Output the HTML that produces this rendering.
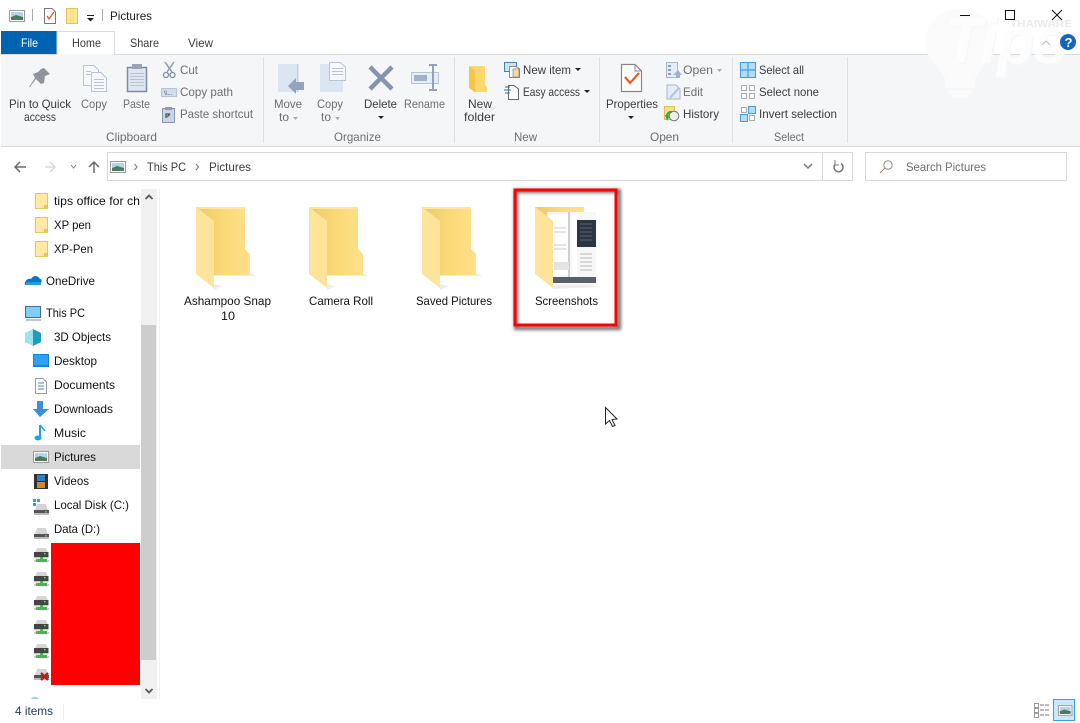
<!DOCTYPE html>
<html><head><meta charset="utf-8"><title>Pictures</title>
<style>
html,body{margin:0;padding:0;background:#fff;width:1080px;height:723px;overflow:hidden}
svg{display:block;position:absolute;left:0;top:0}
text{font-family:"Liberation Sans",sans-serif;font-size:12px;fill:#1e1e1e}
.g{fill:#6d6d6d}.r{fill:#3b3b3b}.n{fill:#111}
</style></head><body>
<svg width="1080" height="723" viewBox="0 0 1080 723" xmlns="http://www.w3.org/2000/svg">
<defs>
<linearGradient id="fb" x1="0" x2="1" y1="0" y2="0"><stop offset="0" stop-color="#eec868"/><stop offset=".5" stop-color="#fad976"/><stop offset="1" stop-color="#ffe08c"/></linearGradient>
<filter id="bs" x="-20%" y="-20%" width="140%" height="140%"><feGaussianBlur stdDeviation="1.500"/></filter>
<g id="folder">
<path d="M214 276L256 276L248 272L214 272Z M214 290L222 286L214 284Z" fill="#ececec"/>
<path d="M196 207H245V249L250 254V275H214V223Z" fill="url(#fb)"/>
<path d="M196 207H245V209H199Z" fill="#fbe6a6"/>
<path d="M196 207L214 221V288L196 274Z" fill="#fde49a"/>
</g>
<g id="sf"><rect x=".5" y=".5" width="12" height="15" fill="#ffe9a5" stroke="#e8c55c"/><rect x="9" y="12" width="4" height="4" fill="#e8c55c"/></g>
<g id="pic"><rect x=".5" y=".5" width="15" height="11" fill="#fff" stroke="#9a9a9a"/><rect x="2" y="2" width="12" height="8" fill="#b7d4e6"/><path d="M2 7L7 5L14 7V10H2Z" fill="#4f7a62"/></g>
<g id="drv"><path d="M1 7L3 1H12L14 7Z" fill="#d5d5d5"/><rect x="0" y="7" width="15" height="5" fill="#555"/><rect x="0" y="10" width="15" height="2" fill="#bbb"/><rect x="11" y="8" width="1.500" height="1.500" fill="#4fe04f"/></g>
<g id="net"><path d="M1 5L3 0H12L14 5Z" fill="#d5d5d5"/><rect x="0" y="4" width="14.500" height="5" fill="#444"/><rect x="10" y="5" width="1.500" height="1.500" fill="#5fe05f"/><rect x="0" y="9" width="14.500" height="1.500" fill="#c8c8c8"/><rect x="6" y="9" width="3" height="3" fill="#48b455"/><rect x="2" y="11" width="11" height="3" fill="#48b455"/><rect x="0" y="12" width="2" height="2" fill="#ccc"/><rect x="13" y="12" width="2" height="2" fill="#ccc"/></g>
</defs>

<!-- title bar -->
<use href="#pic" x="9" y="10"/>
<rect x="32" y="9" width="1" height="12" fill="#aaa"/>
<path d="M44.500 8.500H52L55.500 12V23.500H44.500Z" fill="#fff" stroke="#777"/>
<path d="M47 16L49 19L54 12" fill="none" stroke="#e8522a" stroke-width="1.300"/>
<rect x="66.500" y="8.500" width="11" height="15" fill="#ffe38f" stroke="#e6c45c"/>
<rect x="87" y="15" width="7" height="1" fill="#222"/><path d="M87 18H94L90.500 21.500Z" fill="#222"/>
<rect x="102" y="9" width="1" height="12" fill="#aaa"/>
<text x="110" y="20" textLength="42" lengthAdjust="spacingAndGlyphs">Pictures</text>

<!-- tabs -->
<rect x="1" y="31" width="56" height="23" fill="#0063b1"/>
<text x="21" y="47" textLength="17" lengthAdjust="spacingAndGlyphs" style="fill:#fff">File</text>
<rect x="1" y="54" width="1079" height="1" fill="#dadbdc"/>
<path d="M57 54.500V31.500H114.500V54.500" fill="#f5f6f7" stroke="#dadbdc"/>
<rect x="58" y="32" width="56" height="23" fill="#fff"/>
<text x="72" y="47" textLength="29" lengthAdjust="spacingAndGlyphs" class="r">Home</text>
<text x="130" y="47" textLength="29" lengthAdjust="spacingAndGlyphs" class="r">Share</text>
<text x="188" y="47" textLength="25" lengthAdjust="spacingAndGlyphs" class="r">View</text>

<!-- ribbon -->
<rect x="1" y="55" width="1079" height="91" fill="#f5f6f7"/>
<rect x="58" y="54" width="56" height="2" fill="#f5f6f7"/>
<rect x="1" y="146" width="1079" height="1" fill="#dadbdc"/>
<g fill="#dfe0e1"><rect x="263" y="57" width="1" height="86"/><rect x="454" y="57" width="1" height="86"/><rect x="599" y="57" width="1" height="86"/><rect x="732" y="57" width="1" height="86"/><rect x="847" y="57" width="1" height="86"/></g>

<!-- pin -->
<path d="M44 68L50 74L45 76L44 83L41 84L36 79L30 87L29 87L35 78L33 74L38 72L41 69Z" fill="#8f959a"/>
<!-- copy -->
<g fill="#f6f8fb" stroke="#b8c4d6"><path d="M83.500 65.500H94L98.500 70V85.500H83.500Z"/><path d="M91.500 72.500H101L106.500 78V91.500H91.500Z"/></g>
<g fill="#b8c4d6"><rect x="94" y="79" width="10" height="1"/><rect x="94" y="82" width="10" height="1"/><rect x="94" y="85" width="10" height="1"/><rect x="94" y="88" width="10" height="1"/><rect x="86" y="71" width="5" height="1"/><rect x="86" y="74" width="5" height="1"/></g>
<!-- paste -->
<rect x="127.500" y="67.500" width="19" height="24" fill="#dfe6f1" stroke="#7f8ba0" stroke-width="1.500"/>
<rect x="132" y="64" width="10" height="5" fill="#9aa3b2"/>
<g fill="#b8c4d6"><rect x="130" y="73" width="14" height="1"/><rect x="130" y="76" width="14" height="1"/><rect x="130" y="79" width="14" height="1"/><rect x="130" y="82" width="14" height="1"/><rect x="130" y="85" width="14" height="1"/></g>
<!-- small clip icons -->
<path d="M165 62L172 72M174 62L167 72" stroke="#8d99ae" stroke-width="1.500" fill="none"/><circle cx="166" cy="75" r="2.500" fill="none" stroke="#7e8da6" stroke-width="1.300"/><circle cx="172.500" cy="75" r="2.500" fill="none" stroke="#7e8da6" stroke-width="1.300"/>
<rect x="161.500" y="88.500" width="15" height="8" fill="#d3dcec" stroke="#b6c2d6"/><text x="164" y="95" style="font-size:6px;fill:#555">\\...</text>
<rect x="162.500" y="108.500" width="12" height="14" fill="#c9d4e6" stroke="#8595ad"/><rect x="165" y="107" width="7" height="3" fill="#8f9aac"/><path d="M166 118V114H170M170 114L167 117" stroke="#555" fill="none" stroke-width="1.300"/>
<text x="180" y="74" textLength="18" lengthAdjust="spacingAndGlyphs" class="g">Cut</text>
<text x="180" y="96" textLength="53" lengthAdjust="spacingAndGlyphs" class="g">Copy path</text>
<text x="180" y="118" textLength="73" lengthAdjust="spacingAndGlyphs" class="g">Paste shortcut</text>
<text x="9" y="108" textLength="62" lengthAdjust="spacingAndGlyphs" class="r">Pin to Quick</text>
<text x="24" y="121" textLength="32" lengthAdjust="spacingAndGlyphs" class="r">access</text>
<text x="81" y="108" textLength="26" lengthAdjust="spacingAndGlyphs" class="g">Copy</text>
<text x="123" y="108" textLength="27" lengthAdjust="spacingAndGlyphs" class="g">Paste</text>
<text x="106" y="141" textLength="51" lengthAdjust="spacingAndGlyphs" class="g">Clipboard</text>

<!-- organize -->
<rect x="278" y="64" width="21" height="28" fill="#dce5f2"/><rect x="297" y="64" width="1" height="28" fill="#c0cde0"/>
<path d="M288 86L296 78V82H304V90H296V94Z" fill="#92a4bd"/>
<text x="274" y="108" textLength="28" lengthAdjust="spacingAndGlyphs" class="g">Move</text>
<text x="279" y="121" textLength="10" lengthAdjust="spacingAndGlyphs" class="g">to</text><path d="M293 117H298L295.500 120Z" fill="#aaa"/>
<rect x="320" y="64" width="23" height="28" fill="#dce5f2"/>
<path d="M329.500 62.500H340L345.500 67V80.500H329.500Z" fill="#f6f8fb" stroke="#b8c4d6"/><g fill="#b8c4d6"><rect x="332" y="68" width="11" height="1"/><rect x="332" y="71" width="11" height="1"/><rect x="332" y="74" width="11" height="1"/></g>
<text x="317" y="108" textLength="26" lengthAdjust="spacingAndGlyphs" class="g">Copy</text>
<text x="321" y="121" textLength="10" lengthAdjust="spacingAndGlyphs" class="g">to</text><path d="M335 117H340L337.500 120Z" fill="#aaa"/>
<path d="M370 67L392 89M392 67L370 89" stroke="#8493ae" stroke-width="4.500" fill="none"/>
<text x="364" y="108" textLength="33" lengthAdjust="spacingAndGlyphs" class="r">Delete</text><path d="M378 116H384L381 119Z" fill="#222"/>
<rect x="411.500" y="72.500" width="27" height="11" fill="#e7edf6" stroke="#b5c3d9"/><rect x="414" y="75" width="13" height="6" fill="#a4b0c4"/>
<path d="M429 65H437M433 65V90M429 90H437" stroke="#93a1b8" stroke-width="2" fill="none"/>
<text x="404" y="108" textLength="41" lengthAdjust="spacingAndGlyphs" class="g">Rename</text>
<text x="334" y="141" textLength="47" lengthAdjust="spacingAndGlyphs" class="g">Organize</text>

<!-- new -->
<path d="M470 66H485V85L487 88V92H474L470 88Z" fill="#fbd86f"/><path d="M469 66L475 70V92L469 88Z" fill="#f6c644"/>
<text x="468" y="108" textLength="24" lengthAdjust="spacingAndGlyphs" class="r">New</text>
<text x="464" y="121" textLength="31" lengthAdjust="spacingAndGlyphs" class="r">folder</text>
<rect x="504.500" y="62.500" width="12" height="9" fill="#cfe2ef" stroke="#3d85b3"/>
<path d="M509.500 66.500H516L519.500 69V77.500H509.500Z" fill="#fff" stroke="#888"/>
<rect x="513" y="69" width="6" height="8" fill="#f4d9a0" stroke="#777" stroke-width=".6"/>
<text x="523" y="74" textLength="48" lengthAdjust="spacingAndGlyphs" class="r">New item</text><path d="M575 68H581L578 71Z" fill="#222"/>
<path d="M508.500 85.500H514L518.500 89V99.500H508.500Z" fill="#fff" stroke="#666"/>
<path d="M505 87H510M504 90H511M505 93H510" stroke="#2c6fa5" fill="none"/>
<text x="523" y="96" textLength="57" lengthAdjust="spacingAndGlyphs" class="r">Easy access</text><path d="M584 90H590L587 93Z" fill="#222"/>
<text x="514" y="141" textLength="23" lengthAdjust="spacingAndGlyphs" class="g">New</text>

<!-- open -->
<path d="M621.500 64.500H635L641.500 71V91.500H621.500Z" fill="#fff" stroke="#888" stroke-width="1.200"/>
<path d="M635 64.500V71H641.500" fill="none" stroke="#888"/>
<path d="M625 77L630 83L639 73" fill="none" stroke="#ee5a24" stroke-width="2.200"/>
<text x="606" y="108" textLength="52" lengthAdjust="spacingAndGlyphs" class="r">Properties</text><path d="M628 116H634L631 119Z" fill="#222"/>
<rect x="666.500" y="62.500" width="11" height="15" fill="#e6ecf5" stroke="#a9b6c9"/><rect x="668" y="65" width="3" height="2" fill="#8ea0b8"/><rect x="668" y="69" width="3" height="2" fill="#8ea0b8"/><rect x="668" y="73" width="3" height="2" fill="#8ea0b8"/><path d="M676 78V75H673L678 70L682 75H680V78Z" fill="#9fb0c8"/>
<text x="683" y="74" textLength="30" lengthAdjust="spacingAndGlyphs" class="g">Open</text><path d="M717 69H722L719.500 72Z" fill="#aaa"/>
<path d="M667 85H676L680 89V99H667Z" fill="#e6ecf5" stroke="#a9b6c9"/><path d="M670 98L679 88" stroke="#b3c2d8" stroke-width="2"/>
<text x="683" y="96" textLength="20" lengthAdjust="spacingAndGlyphs" class="g">Edit</text>
<rect x="664.500" y="106.500" width="10" height="13" fill="#ffdf80" stroke="#e2bf50"/><circle cx="674" cy="116" r="4.800" fill="#eee" stroke="#777"/><path d="M667 116A4 4 0 0 1 672 112" stroke="#39a845" stroke-width="2" fill="none"/><path d="M667 121L665 115H670Z" fill="#39a845"/>
<text x="683" y="118" textLength="36" lengthAdjust="spacingAndGlyphs" class="r">History</text>
<text x="650" y="141" textLength="29" lengthAdjust="spacingAndGlyphs" class="g">Open</text>

<!-- select -->
<rect x="740.500" y="62.500" width="15" height="15" fill="#b6dcf7" stroke="#3f9ce0"/><path d="M748 62V78M740 70H756" stroke="#3f9ce0" stroke-width="1.200"/>
<text x="759" y="74" textLength="45" lengthAdjust="spacingAndGlyphs" class="r">Select all</text>
<g fill="#fff" stroke="#a8a8a8"><rect x="741.500" y="85.500" width="5" height="5"/><rect x="749.500" y="85.500" width="5" height="5"/><rect x="741.500" y="93.500" width="5" height="5"/><rect x="749.500" y="93.500" width="5" height="5"/><rect x="741.500" y="107.500" width="5" height="5"/><rect x="749.500" y="115.500" width="5" height="5"/></g>
<g fill="#b6dcf7" stroke="#3f9ce0"><rect x="748.500" y="106.500" width="7" height="7"/><rect x="740.500" y="114.500" width="7" height="7"/></g>
<text x="759" y="96" textLength="60" lengthAdjust="spacingAndGlyphs" class="r">Select none</text>
<text x="759" y="118" textLength="78" lengthAdjust="spacingAndGlyphs" class="r">Invert selection</text>
<text x="774" y="141" textLength="30" lengthAdjust="spacingAndGlyphs" class="g">Select</text>

<!-- watermark -->
<g>
<path d="M960 9C939 9 925 24 925 42C925 56 937 66 945 78V88H975V78C984 66 995 56 995 42C995 24 981 9 960 9Z" fill="#fbfbfb"/>
<path d="M948 92H972M951 96H969" stroke="#fbfbfb" stroke-width="3"/>
<text x="946.500" y="64.500" textLength="122" lengthAdjust="spacingAndGlyphs" style="font-size:64px;font-weight:bold;font-style:italic;fill:#f8f8f8">Tips</text>
<text x="945" y="63" textLength="122" lengthAdjust="spacingAndGlyphs" style="font-size:64px;font-weight:bold;font-style:italic;fill:#fff;opacity:.85">Tips</text>
<text x="1010" y="27" textLength="62" lengthAdjust="spacingAndGlyphs" style="font-size:10px;font-weight:bold;fill:#ececec">THAIWARE</text>
</g>

<!-- window buttons -->
<rect x="960" y="15" width="10" height="1" fill="#111"/>
<rect x="1005.500" y="10.500" width="9" height="9" fill="none" stroke="#111"/>
<path d="M1052 10L1062 20M1062 10L1052 20" stroke="#111" fill="none"/>
<path d="M1042 45L1046 41L1050 45" stroke="#bbb" fill="none"/>
<circle cx="1068" cy="42" r="8" fill="#1565c0"/>
<text x="1064.500" y="47" style="font-size:13px;font-weight:bold;fill:#fff">?</text>

<!-- nav buttons -->
<path d="M26 167H15M20 162L15 167L20 172" stroke="#6b6b6b" stroke-width="1.500" fill="none"/>
<path d="M45 167H55M50 162L55 167L50 172" stroke="#dadada" stroke-width="1.500" fill="none"/>
<path d="M71 165L73.500 168L76 165" stroke="#8a8a8a" fill="none"/>
<path d="M94 173V162M89 167L94 162L99 167" stroke="#6b6b6b" stroke-width="1.500" fill="none"/>

<!-- address -->
<rect x="107.500" y="152.500" width="745" height="28" fill="#fff" stroke="#d9d9d9"/>
<rect x="822" y="153" width="1" height="28" fill="#d9d9d9"/>
<use href="#pic" x="110" y="161"/>
<path d="M134.500 164L137 167L134.500 170" stroke="#777" fill="none"/>
<text x="147" y="171" textLength="39" lengthAdjust="spacingAndGlyphs" class="r">This PC</text>
<path d="M196 164L198.500 167L196 170" stroke="#777" fill="none"/>
<text x="209" y="171" textLength="42" lengthAdjust="spacingAndGlyphs" class="r">Pictures</text>
<path d="M804 164L808 168L812 164" stroke="#777" stroke-width="1.500" fill="none"/>
<path d="M841 163.500A4.500 4.500 0 1 1 835 164.500" stroke="#777" stroke-width="1.500" fill="none"/><path d="M835 160V165H839" stroke="#777" fill="none"/>
<rect x="865.500" y="152.500" width="201" height="28" fill="#fff" stroke="#d9d9d9"/>
<circle cx="888" cy="165" r="4.200" fill="none" stroke="#8a8a8a"/><path d="M885 168L880 173" stroke="#b47a6a"/>
<text x="906" y="171" textLength="80" lengthAdjust="spacingAndGlyphs" class="g">Search Pictures</text>

<!-- nav pane -->
<rect x="1" y="445" width="139" height="24" fill="#d9d9d9"/>
<use href="#sf" x="35" y="193"/><use href="#sf" x="35" y="217"/><use href="#sf" x="35" y="241"/>
<path d="M25 285C24 281 28 278 31 279C33 275 38 275 40 279C43 279 41 281 41 285Z" fill="#0a74c9"/><path d="M26 282H41V285H26Z" fill="#2d97e3"/>
<rect x="25.500" y="306.500" width="15" height="11" fill="#7fd0f5" stroke="#4a6b8c"/><rect x="26" y="319" width="15" height="2" fill="#bac6d2"/>
<path d="M33 329L41 333V342L33 346Z" fill="#1f9cba"/><path d="M33 329L25 333V342L33 346Z" fill="#9be4ee"/>
<rect x="33" y="354" width="16" height="13" fill="#1482d6"/><rect x="34" y="355" width="14" height="10" fill="#2ea1f2"/>
<path d="M35.500 378.500H43L46.500 382V393.500H35.500Z" fill="#fff" stroke="#999"/><path d="M38 383H44M38 386H44M38 389H44" stroke="#3e8dd0"/>
<path d="M37 401H43V409H49L40 417L33 409H37Z" fill="#3d8edb"/>
<path d="M40 425V438" stroke="#20a0ea" stroke-width="2"/><ellipse cx="38" cy="438" rx="3.500" ry="2.500" fill="#20a0ea"/><path d="M40 425L45 431" stroke="#20a0ea" stroke-width="1.500"/>
<use href="#pic" x="33" y="451"/>
<rect x="34" y="474" width="14" height="15" fill="#2e3135"/><rect x="37" y="475" width="8" height="6" fill="#2f7fc0"/><rect x="37" y="482" width="8" height="6" fill="#c88b2f"/>
<rect x="33" y="499" width="3" height="3" fill="#1ea3f0"/><rect x="37" y="499" width="3" height="3" fill="#1ea3f0"/><rect x="33" y="503" width="3" height="3" fill="#1ea3f0"/>
<use href="#drv" x="34" y="503"/>
<use href="#drv" x="34" y="527"/>
<text x="54" y="205" textLength="86" lengthAdjust="spacingAndGlyphs" class="n">tips office for ch</text>
<text x="54" y="229" textLength="37" lengthAdjust="spacingAndGlyphs" class="n">XP pen</text>
<text x="54" y="253" textLength="39" lengthAdjust="spacingAndGlyphs" class="n">XP-Pen</text>
<text x="46" y="285" textLength="49" lengthAdjust="spacingAndGlyphs" class="n">OneDrive</text>
<text x="46" y="317" textLength="39" lengthAdjust="spacingAndGlyphs" class="n">This PC</text>
<text x="54" y="341" textLength="57" lengthAdjust="spacingAndGlyphs" class="n">3D Objects</text>
<text x="54" y="365" textLength="43" lengthAdjust="spacingAndGlyphs" class="n">Desktop</text>
<text x="54" y="389" textLength="61" lengthAdjust="spacingAndGlyphs" class="n">Documents</text>
<text x="54" y="413" textLength="59" lengthAdjust="spacingAndGlyphs" class="n">Downloads</text>
<text x="54" y="437" textLength="32" lengthAdjust="spacingAndGlyphs" class="n">Music</text>
<text x="54" y="461" textLength="42" lengthAdjust="spacingAndGlyphs" class="n">Pictures</text>
<text x="54" y="485" textLength="35" lengthAdjust="spacingAndGlyphs" class="n">Videos</text>
<text x="54" y="509" textLength="75" lengthAdjust="spacingAndGlyphs" class="n">Local Disk (C:)</text>
<text x="54" y="533" textLength="46" lengthAdjust="spacingAndGlyphs" class="n">Data (D:)</text>
<use href="#net" x="34" y="548"/><use href="#net" x="34" y="572"/><use href="#net" x="34" y="596"/><use href="#net" x="34" y="620"/><use href="#net" x="34" y="644"/>
<use href="#drv" x="34" y="668"/><path d="M41 673L48 680M48 673L41 680" stroke="#d40f1c" stroke-width="2.300"/>
<rect x="51" y="543" width="89" height="142" fill="#f00"/>
<path d="M31 699C33 696 37 696 39 699Z" fill="#9fd0ea"/>
<!-- scrollbar -->
<rect x="141" y="189" width="16" height="510" fill="#f0f0f0"/>
<rect x="141" y="325" width="15" height="335" fill="#cdcdcd"/>
<path d="M145.500 199L149 195.500L152.500 199" stroke="#555" stroke-width="1.700" fill="none"/>
<path d="M145.500 689L149 692.500L152.500 689" stroke="#555" stroke-width="1.700" fill="none"/>
<rect x="159" y="189" width="1" height="510" fill="#f2f2f2"/>

<!-- folders -->
<use href="#folder"/>
<use href="#folder" x="113"/>
<use href="#folder" x="226"/>
<path d="M549 276L600 287L553 289Z" fill="#ececec"/>
<path d="M535 207H584V275H553V223Z" fill="url(#fb)"/>
<rect x="547" y="212" width="49" height="73" fill="#f7f7f7"/>
<rect x="550" y="215" width="18" height="60" fill="#fff"/>
<rect x="568" y="212" width="2" height="65" fill="#cfcfcf"/>
<rect x="572" y="214" width="5" height="62" fill="#fff"/>
<rect x="577" y="220" width="19" height="27" fill="#2b3642"/>
<path d="M580 224H592M580 228H592M580 232H592M580 236H592M580 240H592" stroke="#6a7480" stroke-width=".7"/>
<path d="M580 254H592M580 258H592M580 262H592M580 266H592M580 270H592" stroke="#b8b8b8"/>
<path d="M554 228H566M554 232H566M554 245H566M554 249H566" stroke="#c8c8c8"/>
<rect x="554" y="262" width="15" height="8" fill="#e4e4e4"/>
<rect x="552" y="277" width="44" height="6" fill="#5a6068"/>
<path d="M535 207L553 221V288L535 274Z" fill="#fde49a"/>
<text x="184" y="305" textLength="87" lengthAdjust="spacingAndGlyphs" class="n">Ashampoo Snap</text>
<text x="221" y="320" textLength="14" lengthAdjust="spacingAndGlyphs" class="n">10</text>
<text x="309" y="305" textLength="64" lengthAdjust="spacingAndGlyphs" class="n">Camera Roll</text>
<text x="416" y="305" textLength="76" lengthAdjust="spacingAndGlyphs" class="n">Saved Pictures</text>
<text x="535" y="305" textLength="63" lengthAdjust="spacingAndGlyphs" class="n">Screenshots</text>

<!-- red box -->
<rect x="516" y="191" width="103" height="137" fill="none" stroke="#333" stroke-width="4" opacity=".7" filter="url(#bs)"/>
<rect x="515" y="190" width="101" height="135" fill="none" stroke="#f00" stroke-width="3"/>

<!-- cursor -->
<path d="M605.500 407.500V424L609.500 420.500L612.500 426.500L615 425.500L612 419.500L617 419Z" fill="#fff" stroke="#222"/>

<!-- status bar -->
<text x="15" y="715" textLength="38" lengthAdjust="spacingAndGlyphs" style="fill:#1f3a63">4 items</text>
<rect x="63" y="704" width="1" height="16" fill="#eee"/>
<rect x="1034.500" y="703.500" width="4" height="4" fill="#fff" stroke="#999"/><rect x="1034.500" y="708.500" width="4" height="4" fill="#fff" stroke="#999"/><rect x="1034.500" y="713.500" width="4" height="4" fill="#fff" stroke="#999"/>
<path d="M1040 705H1050M1040 710H1050M1040 715H1050" stroke="#777" stroke-dasharray="4 1"/>
<rect x="1053.500" y="699.500" width="21" height="21" fill="#cce8f8" stroke="#2ea5e6"/>
<use href="#pic" transform="translate(1058,705) scale(.9)"/>
</svg>
</body></html>
